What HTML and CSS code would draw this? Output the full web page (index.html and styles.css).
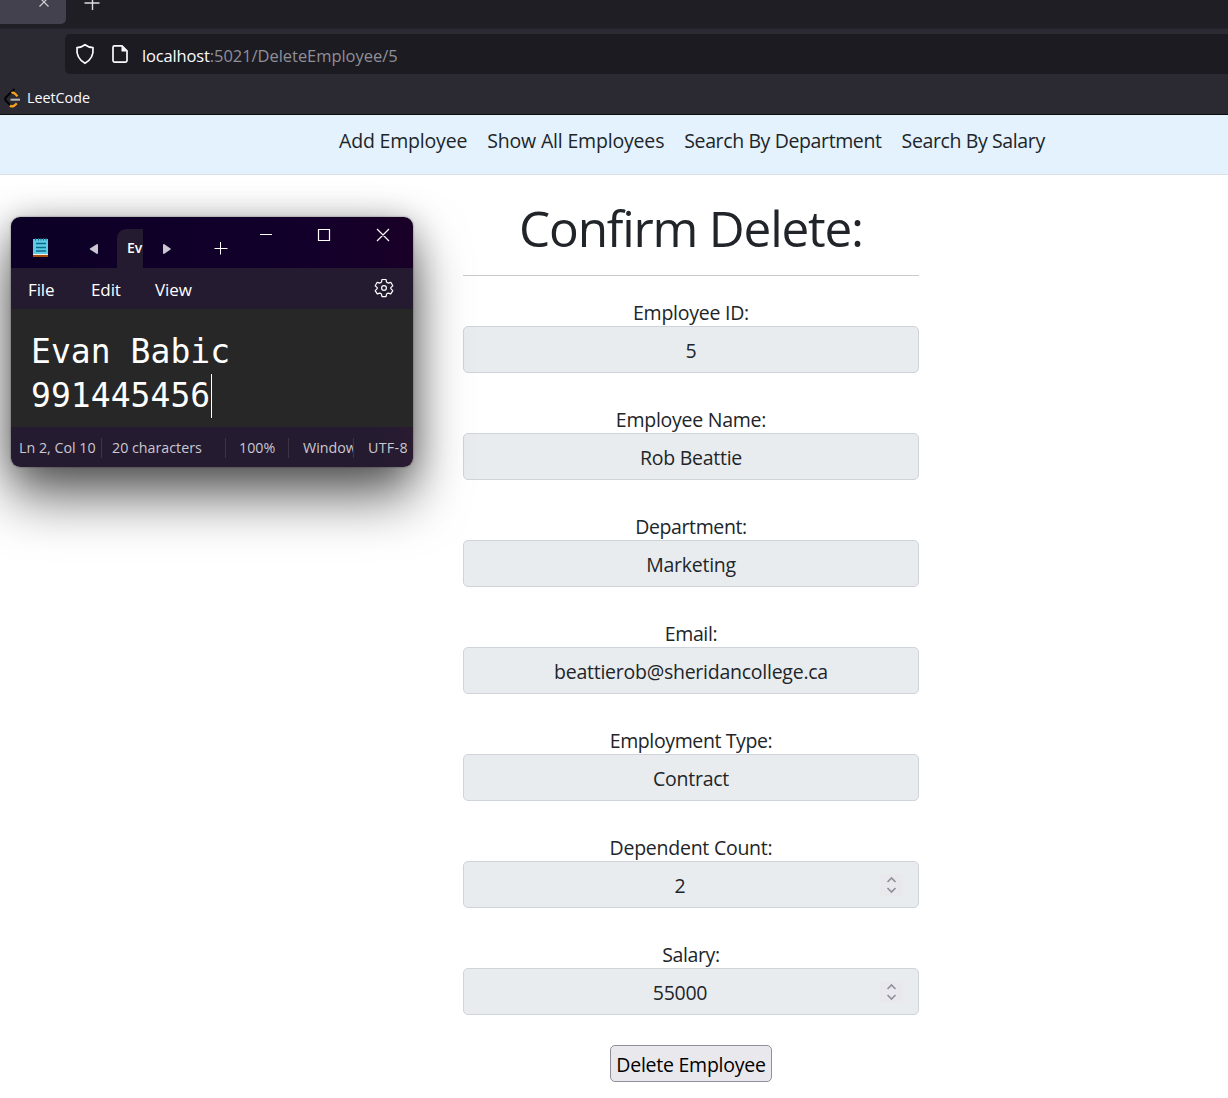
FILE: index.html
```html
<!DOCTYPE html>
<html lang="en">
<head>
<meta charset="utf-8">
<title>Delete Employee</title>
<link rel="stylesheet" href="styles.css">
</head>
<body>
<header class="browser">
  <div class="tabs">
    <div class="tab"><svg width="12" height="16" viewBox="0 0 12 16"><path d="M1.500 -2.500l9 9M10.500-2.500l-9 9"/></svg></div>
    <svg class="new-tab" width="16" height="16" viewBox="0 0 16 16"><path d="M.5 3h15M8.500-5v15"/></svg>
  </div>
  <div class="toolbar">
    <div class="address">
      <svg class="shield" width="20" height="22" viewBox="0 0 20 22"><path d="M10 1.700Q13.500 4.300 18 4.700Q19 15.500 10 20.300Q1 15.500 2 4.700Q6.500 4.300 10 1.700Z"/></svg>
      <svg class="doc" width="18" height="20" viewBox="0 0 18 20"><path d="M3.500 1.900h7.500l5 5v9.700q0 1.500-1.500 1.500h-11q-1.500 0-1.500-1.500V3.400q0-1.500 1.500-1.500z"/><path class="fold" d="M10.500 1.900v5.500h5.500z"/></svg>
      <span class="url"><b>localhost</b><span>:5021/DeleteEmployee/5</span></span>
    </div>
  </div>
  <div class="bookmarks">
    <svg width="18" height="20" viewBox="0 0 18 20"><path d="M10.500 1L1.800 9.500Q.6 11 1.800 12.500L6 17" stroke="#070707" stroke-width="2.200"/><path d="M7.500 5q1.500-1 3 .3l3 3M6 17.500q2 1.700 4 .3l2.800-2.500" stroke="#f8a11b" stroke-width="2.300"/><path d="M6.500 11.700h9.500" stroke="#b8b8b8" stroke-width="2"/></svg>
    <span>LeetCode</span>
  </div>
</header>

<nav class="menu">
  <a class="wide">Add Employee</a>
  <a class="wide">Show All Employees</a>
  <a class="tight">Search By Department</a>
  <a class="tight">Search By Salary</a>
</nav>

<main class="confirm">
  <h1>Confirm Delete:</h1>
  <form>
    <div class="field"><label>Employee ID:</label><div class="value">5</div></div>
    <div class="field"><label>Employee Name:</label><div class="value">Rob Beattie</div></div>
    <div class="field"><label class="tight">Department:</label><div class="value">Marketing</div></div>
    <div class="field"><label class="tight">Email:</label><div class="value">beattierob@sheridancollege.ca</div></div>
    <div class="field"><label class="tight">Employment Type:</label><div class="value">Contract</div></div>
    <div class="field"><label>Dependent Count:</label><div class="value number">2<svg class="spin" width="23" height="22" viewBox="0 0 23 22"><path d="M7.500 8l4-4 4 4M7.500 14l4 4 4-4"/></svg></div></div>
    <div class="field"><label class="tight">Salary:</label><div class="value number">55000<svg class="spin" width="23" height="22" viewBox="0 0 23 22"><path d="M7.500 8l4-4 4 4M7.500 14l4 4 4-4"/></svg></div></div>
    <button type="button">Delete Employee</button>
  </form>
</main>

<section class="notepad">
  <div class="titlebar">
    <svg class="app" width="16" height="21" viewBox="0 0 16 21"><path d="M0 17h15v3H0z" fill="#a34b0b"/><path d="M0 16h15v2H0z" fill="#f5eee8"/><path d="M0 2h15v15H0z" fill="#5fcbe5"/><path d="M2.500 1v2.500M5.500 1v2.500M8 1v2.500M10.500 1v2.500M13 1v2.500" stroke="#17627c" stroke-width="1"/><path d="M3 6.500h10M3 10.500h10M3 14h10" stroke="#076b8c" stroke-width="1.600"/></svg>
    <svg class="prev" width="10" height="12" viewBox="0 0 10 12"><path d="M8 1v10q1 0 1-1V2q0-1-1-1L1 5.500q-.8.500 0 1L8 11"/></svg>
    <div class="file-tab">Ev</div>
    <svg class="next" width="10" height="12" viewBox="0 0 10 12"><path d="M2 1Q1 1 1 2v8q0 1 1 1l6.500-4.500q.8-.5 0-1z"/></svg>
    <svg class="plus" width="14" height="14" viewBox="0 0 14 14"><path d="M.5 7.500h13M6.500 1v12.500"/></svg>
    <svg class="controls" width="132" height="14" viewBox="0 0 132 14"><path d="M1 6.500h12M59.500 1.500h11v11h-11zM118 1l12 12M130 1l-12 12"/></svg>
  </div>
  <div class="menubar">
    <span class="m1">File</span><span class="m2">Edit</span><span class="m3">View</span>
    <svg class="gear" width="20" height="20" viewBox="0 0 20 20"><path d="M8 1.500h4l.6 2.700 1.500.9 2.700-.8 2 3.400-2 1.900v1l2 2-2 3.300-2.700-.8-1.500.9-.6 2.700H8l-.6-2.700-1.500-.9-2.700.8-2-3.300 2-2v-1l-2-1.900 2-3.400 2.700.8 1.500-.9z"/><circle cx="10" cy="10" r="2.400"/></svg>
  </div>
  <div class="editor"><div>Evan Babic</div><div class="caret">991445456</div></div>
  <div class="status">
    <span class="s1">Ln 2, Col 10</span><span class="s2">20 characters</span><span class="s3">100%</span><span class="s4">Windows</span><span class="s5">UTF-8</span>
  </div>
</section>
</body>
</html>
```
FILE: styles.css
```css
* { box-sizing: border-box; }
body { margin: 0; height: 1098px; overflow: hidden; position: relative; background: #fff; color: #212529; font: 19.500px/30px "Open Sans", "Noto Sans", sans-serif; letter-spacing: -.25px; }
svg { display: block; fill: none; flex: none; }
b { font-weight: 400; }

.browser { height: 115px; background: #2b2a33; border-bottom: 1px solid #0c0c0d; letter-spacing: 0; }
.tabs { height: 29px; background: #1f1e25; border-bottom: 1px solid #25242c; display: flex; }
.tab { width: 66px; height: 24px; background: #42414d; border-radius: 0 0 5px 0; display: flex; justify-content: flex-end; padding-right: 16px; }
.tab svg { stroke: #cfcfd5; stroke-width: 1.2; }
.new-tab { margin-left: 18px; stroke: #dcdce2; stroke-width: 1.400; }
.toolbar { padding: 5px 0 0 65px; }
.address { height: 40px; background: #1c1b22; border-radius: 5px 0 0 5px; display: flex; align-items: center; padding-left: 10px; }
.address svg { stroke: #fbfbfe; stroke-width: 1.700; }
.shield { stroke-linejoin: round; }
.doc { margin-left: 16px; }
.doc .fold { fill: #fbfbfe; stroke: none; }
.url { margin-left: 13px; padding-top: 3px; font-size: 16.500px; letter-spacing: -.05px; color: #8f8f97; }
.url b { color: #fbfbfe; letter-spacing: -.15px; }
.bookmarks { height: 40px; display: flex; align-items: center; padding: 7px 0 0 4px; font-size: 14.300px; color: #fbfbfe; }
.bookmarks span { margin-left: 5px; }

.menu { height: 60px; background: #e3f2fd; border-bottom: 1px solid #dbe1e6; display: flex; gap: 20px; padding: 11px 0 0 339px; white-space: nowrap; }
.wide { letter-spacing: -.18px; }
.tight { letter-spacing: -.38px; }

.confirm { width: 456px; margin-left: 463px; text-align: center; }
h1 { margin: 0; height: 101px; padding-top: 23px; font-size: 49.500px; line-height: 60px; font-weight: 400; letter-spacing: -1.200px; border-bottom: 1px solid #c8c9ca; }
form { padding-top: 22px; }
.field { height: 107px; display: flex; flex-direction: column; align-items: center; }
.field label { height: 28px; }
.value { width: 456px; height: 47px; padding-top: 9px; background: #e9ecef; border: 1px solid #ced4da; border-radius: 5px; position: relative; }
.number { padding-right: 22px; }
.spin { position: absolute; right: 15px; top: 12px; background: #e9e9ed; stroke: #8f8f9d; stroke-width: 1.700; }
button { display: block; width: 162px; height: 37px; margin: -2px auto 0; padding: 3px 0 0; background: #e9e9ed; border: 1px solid #8f8f9d; border-radius: 5px; font: inherit; letter-spacing: -.25px; color: #000; white-space: nowrap; }

.notepad { position: absolute; left: 11px; top: 217px; width: 402px; height: 250px; border-radius: 9px; box-shadow: 0 0 2px rgba(0,0,0,.5), 0 30px 54px rgba(0,0,0,.6), 0 4px 34px rgba(0,0,0,.28); letter-spacing: 0; }
.titlebar { height: 51px; background: linear-gradient(90deg, #0c0026, #12002b 70%, #190027); border-radius: 9px 9px 0 0; display: flex; align-items: flex-start; padding-left: 22px; }
.app { margin-top: 20px; }
.prev, .next { fill: #cbc6d3; }
.prev { margin: 26px 0 0 40px; }
.file-tab { margin: 12px 0 0 18px; width: 26px; height: 39px; overflow: hidden; background: #241b30; border-radius: 9px 0 0; padding: 4px 0 0 10px; font-size: 14px; font-weight: 600; color: #fff; }
.next { margin: 26px 0 0 19px; }
.plus { margin: 24px 0 0 42px; stroke: #fff; }
.controls { margin: 11px 0 0 31px; stroke: #fff; stroke-width: 1.200; }
.menubar { height: 41px; background: #241b30; border-bottom: 1px solid #211c28; display: flex; padding: 7px 0 0 17px; font-size: 17px; letter-spacing: -.1px; color: #fff; }
.m1 { width: 63px; } .m2 { width: 64px; } .m3 { width: 219px; }
.gear { margin-top: 3px; stroke: #fff; stroke-width: 1.200; stroke-linejoin: round; }
.editor { height: 118px; background: #272727; padding: 21px 20px 0; color: #fff; font: 33px/44px "DejaVu Sans Mono", monospace; letter-spacing: .05px; }
.caret { width: 181px; height: 44px; border-right: 1px solid #fff; white-space: nowrap; }
.status { height: 40px; background: linear-gradient(90deg, #241b31 90%, #2a1b31); border-radius: 0 0 9px 9px; display: flex; align-items: center; padding-top: 1px; font-size: 14.250px; color: #cbc7cf; line-height: 20px; white-space: nowrap; }
.status span { overflow: hidden; border-right: 1px solid #3b3346; }
.status .s5 { border: 0; letter-spacing: .3px; }
.s1 { width: 91px; padding-left: 8px; } .s2 { width: 124px; padding-left: 10px; } .s3 { width: 63px; padding-left: 13px; } .s4 { width: 65px; padding-left: 14px; } .s5 { width: 59px; padding-left: 14px; }
```
